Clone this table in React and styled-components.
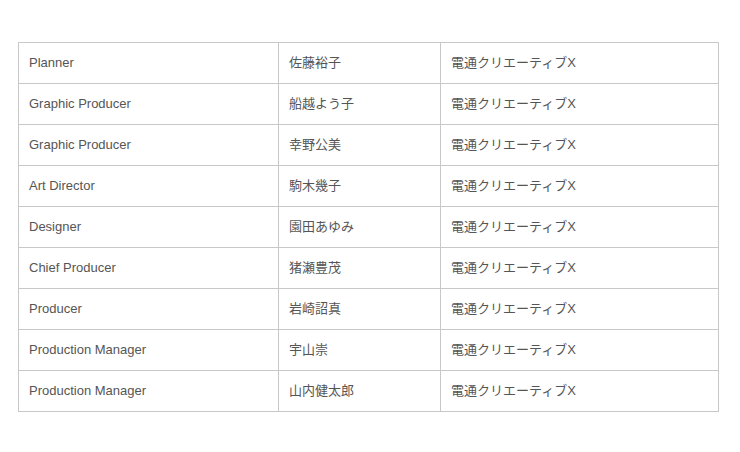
import React from "react";
import styled, { createGlobalStyle } from "styled-components";

const GlobalStyle = createGlobalStyle`
  html, body {
    margin: 0;
    padding: 0;
    background: #fff;
  }
  body {
    font-family: "Liberation Sans", Arial, "Noto Sans CJK JP", sans-serif;
  }
`;

const Page = styled.div`
  padding: 42px 18px 0 18px;
`;

const CreditTable = styled.table`
  width: 700px;
  border-collapse: collapse;
  table-layout: fixed;
  color: #555;
  font-size: 13px;
`;

const Col = styled.col`
  width: ${(p) => p.w}px;
`;

const Cell = styled.td`
  border: 1px solid #c8c8c8;
  padding: 13px 10px;
  line-height: 14px;
  text-align: left;
  white-space: nowrap;
  overflow: hidden;
`;

const credits = [
  ["Planner", "佐藤裕子"],
  ["Graphic Producer", "船越よう子"],
  ["Graphic Producer", "幸野公美"],
  ["Art Director", "駒木幾子"],
  ["Designer", "園田あゆみ"],
  ["Chief Producer", "猪瀬豊茂"],
  ["Producer", "岩崎詔真"],
  ["Production Manager", "宇山崇"],
  ["Production Manager", "山内健太郎"],
];

export default function App() {
  return (
    <Page>
      <GlobalStyle />
      <CreditTable>
        <colgroup>
          <Col w={260} />
          <Col w={162} />
          <Col w={278} />
        </colgroup>
        <tbody>
          {credits.map((el, index) => (
            <tr key={index}>
              <Cell>{el[0]}</Cell>
              <Cell>{el[1]}</Cell>
              <Cell>電通クリエーティブX</Cell>
            </tr>
          ))}
        </tbody>
      </CreditTable>
    </Page>
  );
}
